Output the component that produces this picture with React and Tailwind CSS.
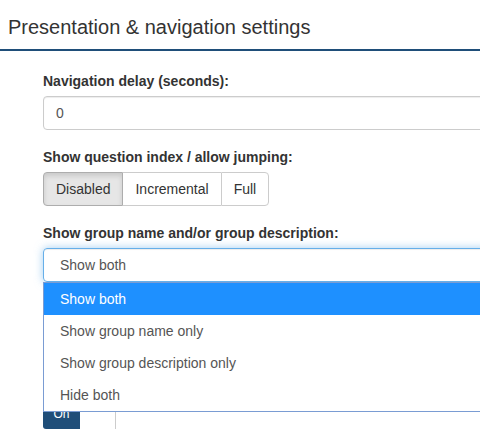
import React from 'react';

const options = ['Show both', 'Show group name only', 'Show group description only', 'Hide both'];

export default function App() {
  return (
    <div className="w-[480px] h-[429px] overflow-hidden bg-white text-[#333] font-['Liberation_Sans',Arial,sans-serif]">
      {/* Header */}
      <div className="h-[51px] border-b-2 border-[#1f4e79] px-2 pt-[15px]">
        <h2 className="text-[20px] leading-[24px] font-normal">Presentation &amp; navigation settings</h2>
      </div>

      <div className="pl-[43px] pt-[20px] w-[560px]">
        {/* Navigation delay */}
        <div className="mb-[17px]">
          <label className="block text-[14px] font-bold leading-[20px] mb-[5px]">Navigation delay (seconds):</label>
          <div className="h-[34px] border border-[#ccc] rounded-[4px] shadow-[inset_0_1px_1px_rgba(0,0,0,0.075)] px-[12px] flex items-center text-[14px] text-[#555]">
            0
          </div>
        </div>

        {/* Question index */}
        <div className="mb-[17px]">
          <label className="block text-[14px] font-bold leading-[20px] mb-[5px]">Show question index / allow jumping:</label>
          <div className="inline-flex h-[34px] text-[14px] text-[#333]">
            <button className="px-[12px] border border-[#adadad] rounded-l-[4px] bg-[#e6e6e6] shadow-[inset_0_3px_5px_rgba(0,0,0,0.125)]">Disabled</button>
            <button className="px-[12px] border-y border-[#ccc] bg-white">Incremental</button>
            <button className="px-[12px] border border-[#ccc] rounded-r-[4px] bg-white">Full</button>
          </div>
        </div>

        {/* Group name / description */}
        <div className="relative mb-[16px]">
          <label className="block text-[14px] font-bold leading-[20px] mb-[5px]">Show group name and/or group description:</label>
          <div className="h-[34px] border border-[#66afe9] rounded-[4px] shadow-[inset_0_1px_1px_rgba(0,0,0,0.075),0_0_8px_rgba(102,175,233,0.6)] px-[16px] flex items-center text-[14px] text-[#555]">
            Show both
          </div>
          {/* native dropdown list */}
          <div className="absolute left-0 top-[59px] w-full z-10 bg-white border border-[#7a9cd3] text-[14px]">
            {options.map((o, i) => (
              <div
                key={o}
                className={`h-[32px] flex items-center px-[16px] ${i === 0 ? 'bg-[#1e90ff] text-white' : 'text-[#555]'}`}
              >
                {o}
              </div>
            ))}
          </div>
        </div>

        {/* Settings hidden under the open list */}
        <div className="mb-[17px] invisible">
          <label className="block text-[14px] font-bold leading-[20px] mb-[5px]">Show question number and/or code:</label>
          <div className="h-[34px] border border-[#ccc] rounded-[4px]"></div>
        </div>

        <div>
          <label className="block text-[14px] font-bold leading-[20px] mb-[5px] invisible">Show "No answer":</label>
          <div className="inline-flex h-[30px] text-[12px]">
            <span className="w-[37px] bg-[#1f4e79] text-white flex items-center justify-center rounded-l-[3px]">On</span>
            <span className="w-[36px] bg-white border-r border-[#ccc]"></span>
          </div>
        </div>
      </div>
    </div>
  );
}
